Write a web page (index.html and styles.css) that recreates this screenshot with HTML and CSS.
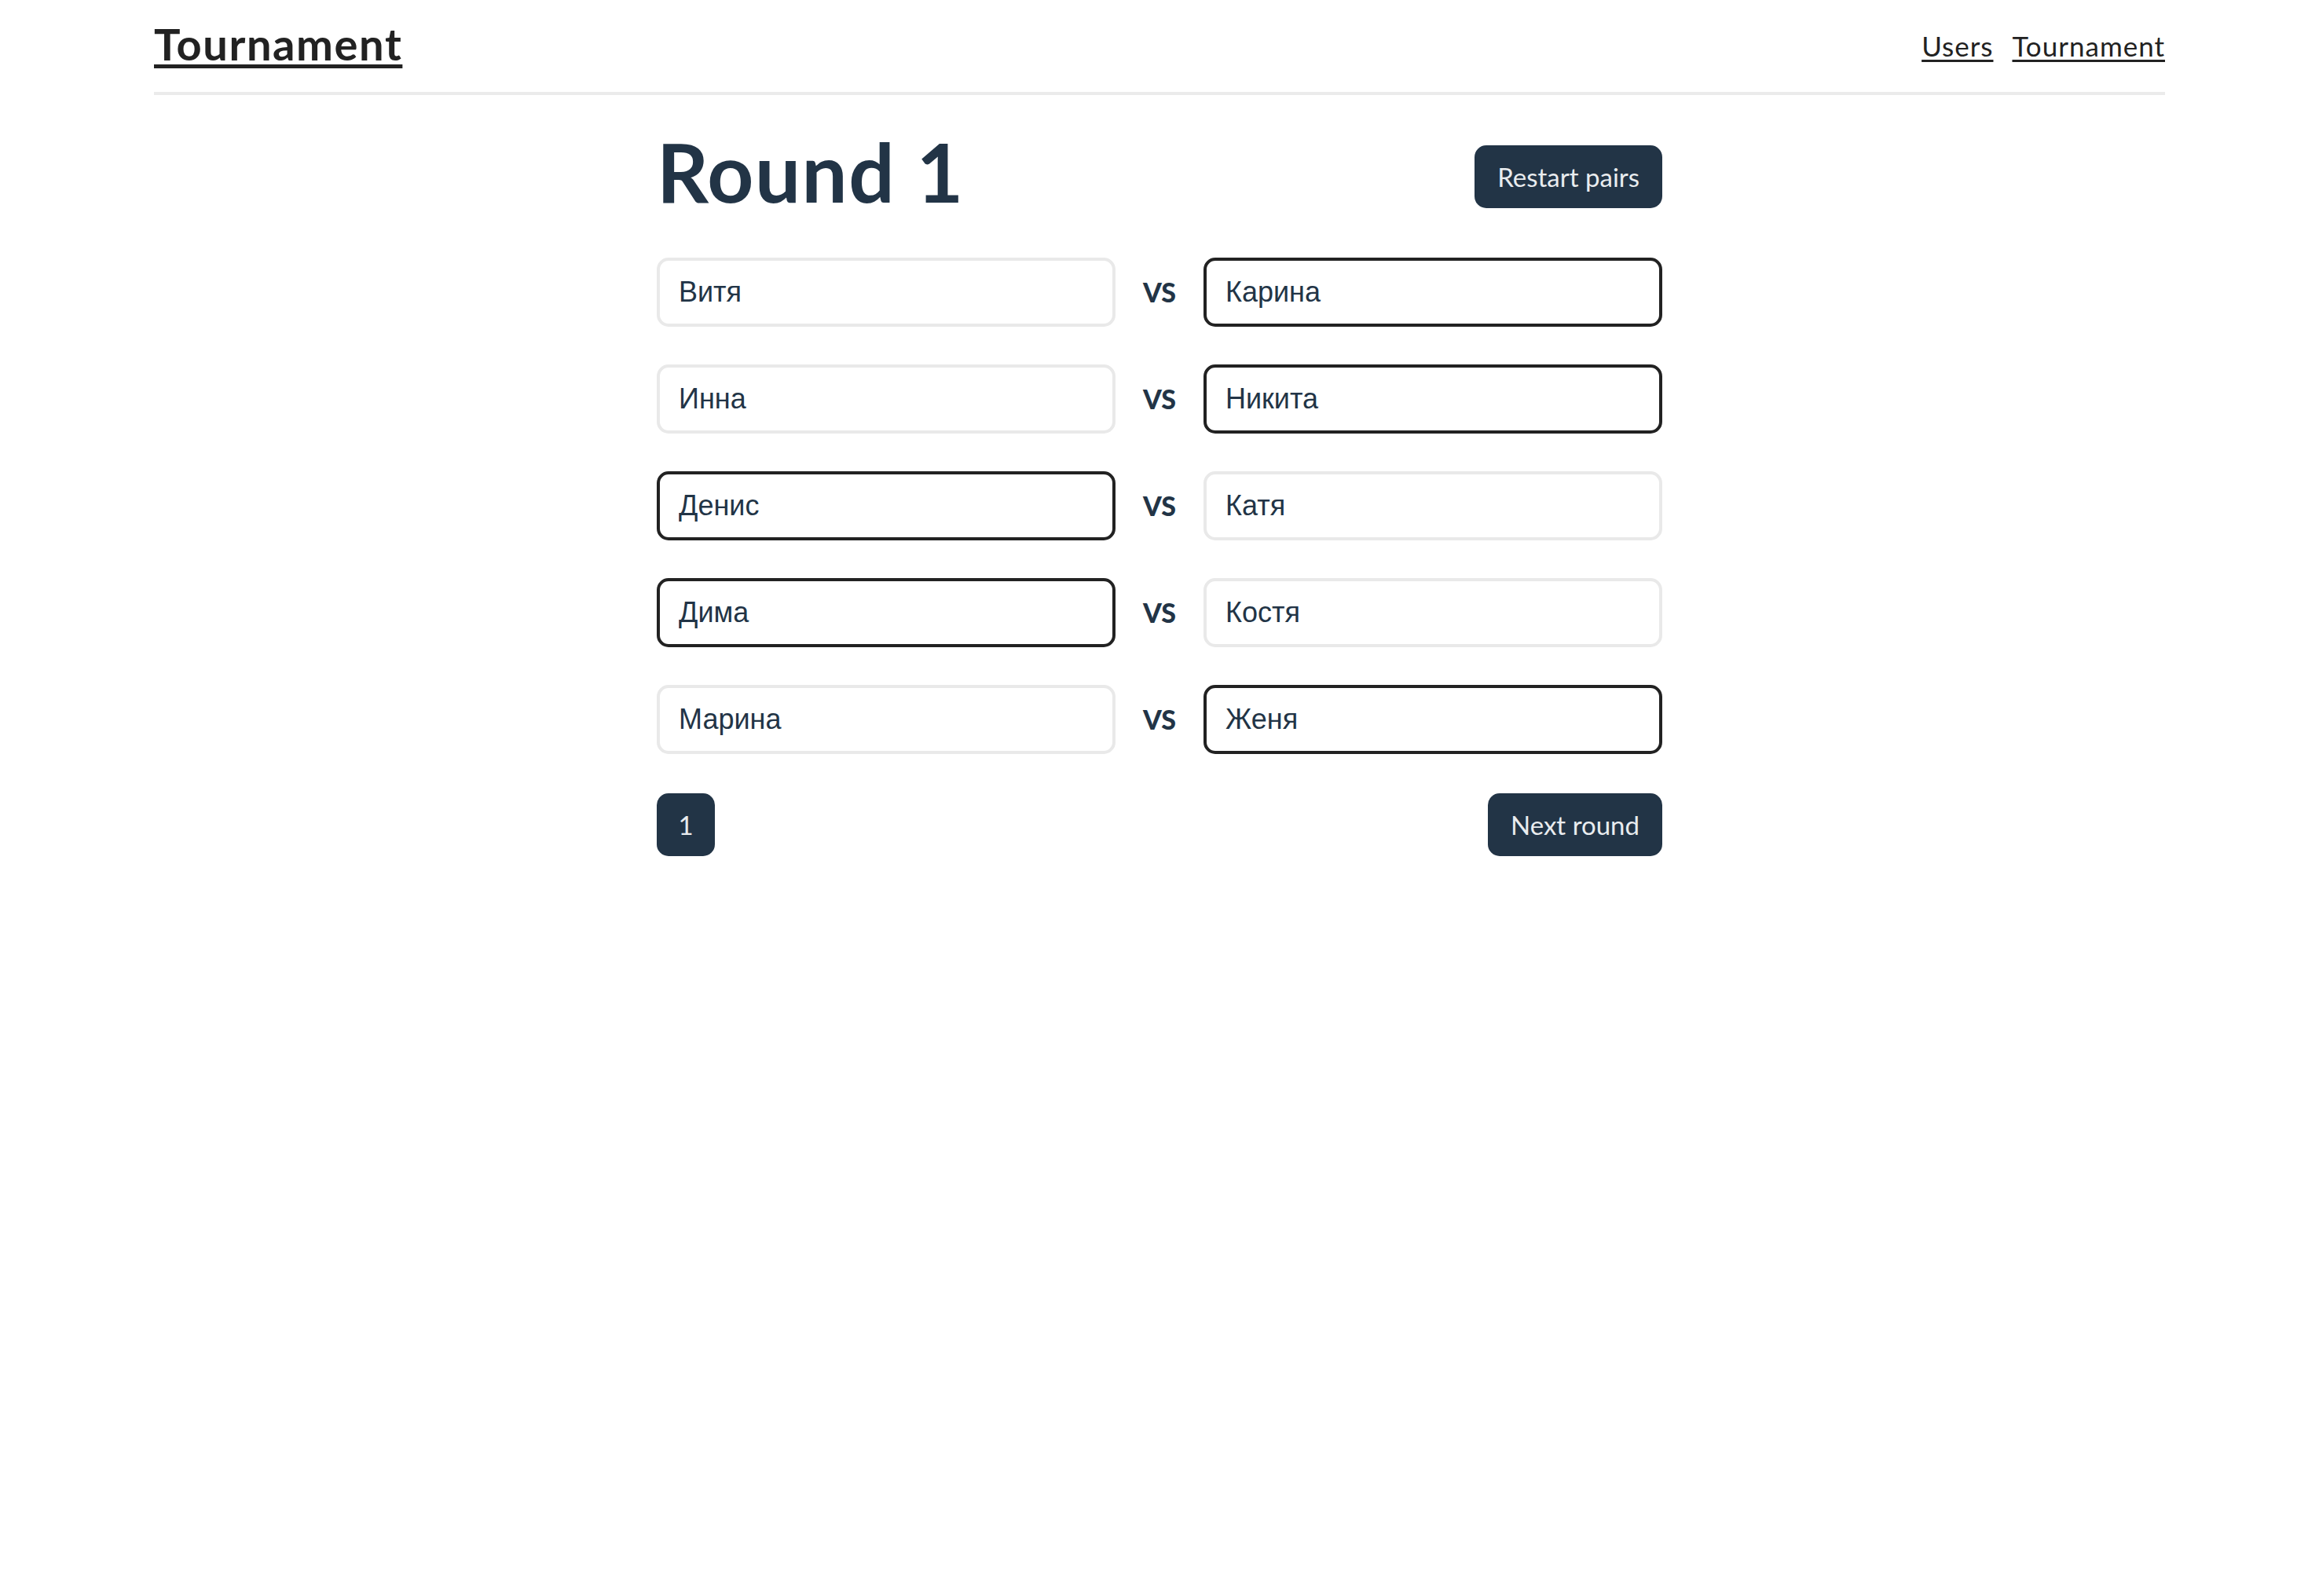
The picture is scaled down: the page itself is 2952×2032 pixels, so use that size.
FILE: index.html
```html
<!DOCTYPE html>
<html lang="ru">
<head>
<meta charset="utf-8">
<title>Tournament</title>
<link rel="stylesheet" href="styles.css">
</head>
<body>
<header class="site-header">
  <a class="brand" href="#">Tournament</a>
  <nav class="nav">
    <a class="nav-link" href="#">Users</a>
    <a class="nav-link" href="#">Tournament</a>
  </nav>
</header>
<main class="round">
  <div class="round-head">
    <h1 class="round-title">Round 1</h1>
    <button class="btn btn-restart" type="button">Restart pairs</button>
  </div>
  <div class="pairs">
    <input class="player" type="text" value="Витя">
    <span class="vs">VS</span>
    <input class="player winner" type="text" value="Карина">

    <input class="player" type="text" value="Инна">
    <span class="vs">VS</span>
    <input class="player winner" type="text" value="Никита">

    <input class="player winner" type="text" value="Денис">
    <span class="vs">VS</span>
    <input class="player" type="text" value="Катя">

    <input class="player winner" type="text" value="Дима">
    <span class="vs">VS</span>
    <input class="player" type="text" value="Костя">

    <input class="player" type="text" value="Марина">
    <span class="vs">VS</span>
    <input class="player winner" type="text" value="Женя">
  </div>
  <div class="round-foot">
    <button class="btn btn-page" type="button">1</button>
    <button class="btn" type="button">Next round</button>
  </div>
</main>
</body>
</html>
```

FILE: styles.css
```css
html, body {
  margin: 0;
  padding: 0;
  background: #ffffff;
}

body {
  font-family: Lato, "Noto Sans", sans-serif;
  color: #222222;
}

.site-header {
  width: 2560px;
  margin: 0 auto;
  padding: 22px 0 28px;
  display: flex;
  justify-content: space-between;
  align-items: center;
  border-bottom: 4px solid #ebebeb;
}

.brand {
  font-size: 56px;
  font-weight: 700;
  line-height: 1.2;
  letter-spacing: 1.6px;
  color: #222222;
  text-decoration: underline;
  text-decoration-thickness: 5px;
  text-underline-offset: 5px;
}

.nav {
  display: flex;
  gap: 24px;
  margin-top: 4px;
}

.nav-link {
  font-size: 35px;
  line-height: 1.2;
  letter-spacing: 1px;
  color: #222222;
  text-decoration: underline;
  text-decoration-thickness: 3px;
  text-underline-offset: 4px;
}

.round {
  width: 1280px;
  margin: 0 auto;
}

.round-head {
  display: flex;
  justify-content: space-between;
  align-items: center;
  margin-top: 36px;
}

.round-title {
  margin: 0;
  font-size: 103px;
  font-weight: 700;
  line-height: 1.2;
  letter-spacing: 1.5px;
  color: #223446;
}

.btn {
  height: 80px;
  padding: 0 29px;
  border: 0;
  border-radius: 15px;
  background: #223446;
  color: #e9ecef;
  font-family: Lato, "Noto Sans", sans-serif;
  font-size: 33px;
  line-height: 80px;
}

.btn-restart {
  margin-top: 12px;
}

.btn-page {
  width: 74px;
  padding: 0;
}

.pairs {
  display: grid;
  grid-template-columns: 1fr 112px 1fr;
  row-gap: 48px;
  align-items: center;
  margin-top: 47px;
}

.player {
  box-sizing: border-box;
  width: 100%;
  height: 88px;
  margin: 0;
  padding: 0 24px;
  border: 4px solid #e9e9e9;
  border-radius: 15px;
  background: #ffffff;
  font-family: "Liberation Sans", Arial, sans-serif;
  font-size: 36px;
  color: #223446;
  outline: none;
}

.player.winner {
  border-color: #222222;
}

.vs {
  text-align: center;
  font-size: 34px;
  font-weight: 900;
  color: #223446;
}

.round-foot {
  display: flex;
  justify-content: space-between;
  margin-top: 50px;
}
```
